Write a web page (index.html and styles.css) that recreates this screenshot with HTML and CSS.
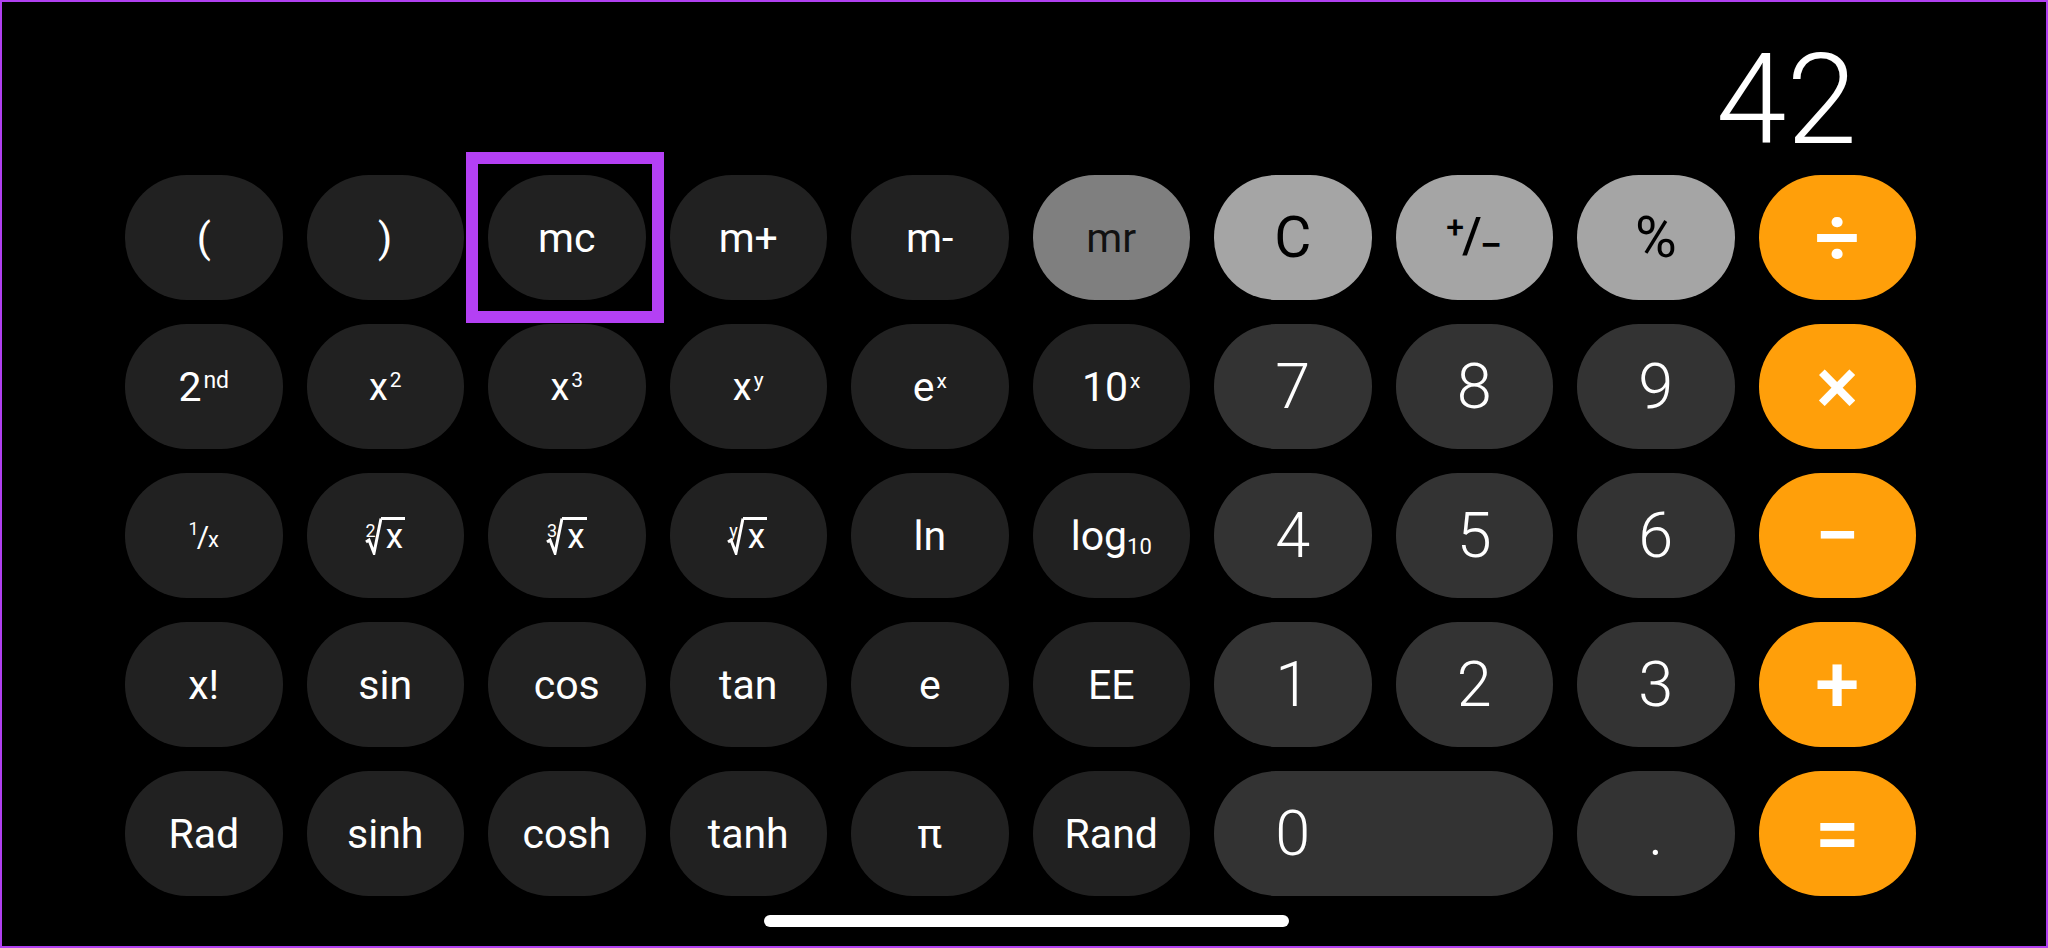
FILE: index.html
```html
<!DOCTYPE html>
<html lang="en">
  <head>
    <meta charset="UTF-8" />
    <meta name="viewport" content="width=device-width, initial-scale=1.0" />
    <title>Calculator</title>
    <link rel="stylesheet" href="styles.css">
  </head>
  <body>
    <div class="screen">
      <div class="display">42</div>

      <div class="keys">
        <!-- row 1 -->
        <div class="key fn">(</div>
        <div class="key fn">)</div>
        <div class="key fn marked">mc<span class="highlight"></span></div>
        <div class="key fn">m+</div>
        <div class="key fn">m-</div>
        <div class="key mem">mr</div>
        <div class="key light big">C</div>
        <div class="key light">
          <span class="pm"><span class="pm-plus">+</span>/<span class="pm-minus">&minus;</span></span>
        </div>
        <div class="key light big">%</div>
        <div class="key op">&divide;</div>

        <!-- row 2 -->
        <div class="key fn"><span>2<span class="sup-nd">nd</span></span></div>
        <div class="key fn"><span class="small-base">x<span class="sup">2</span></span></div>
        <div class="key fn"><span class="small-base">x<span class="sup">3</span></span></div>
        <div class="key fn"><span class="small-base">x<span class="sup">y</span></span></div>
        <div class="key fn"><span>e<span class="sup">x</span></span></div>
        <div class="key fn"><span>10<span class="sup">x</span></span></div>
        <div class="key num">7</div>
        <div class="key num">8</div>
        <div class="key num">9</div>
        <div class="key op">&times;</div>

        <!-- row 3 -->
        <div class="key fn">
          <span class="frac"><span class="frac-top">1</span>/<span class="frac-bottom">x</span></span>
        </div>
        <div class="key fn">
          <span class="root">
            <span class="root-idx">2</span>
            <svg class="radical" width="17" height="38" viewBox="0 0 17 38"><path d="M1 25 L4 23 L9 36 L16 1.5" /></svg>
            <span class="root-x">x</span>
          </span>
        </div>
        <div class="key fn">
          <span class="root">
            <span class="root-idx">3</span>
            <svg class="radical" width="17" height="38" viewBox="0 0 17 38"><path d="M1 25 L4 23 L9 36 L16 1.5" /></svg>
            <span class="root-x">x</span>
          </span>
        </div>
        <div class="key fn">
          <span class="root">
            <span class="root-idx">y</span>
            <svg class="radical" width="17" height="38" viewBox="0 0 17 38"><path d="M1 25 L4 23 L9 36 L16 1.5" /></svg>
            <span class="root-x">x</span>
          </span>
        </div>
        <div class="key fn">ln</div>
        <div class="key fn"><span>log<span class="sub">10</span></span></div>
        <div class="key num">4</div>
        <div class="key num">5</div>
        <div class="key num">6</div>
        <div class="key op">&minus;</div>

        <!-- row 4 -->
        <div class="key fn">x!</div>
        <div class="key fn">sin</div>
        <div class="key fn">cos</div>
        <div class="key fn">tan</div>
        <div class="key fn">e</div>
        <div class="key fn">EE</div>
        <div class="key num">1</div>
        <div class="key num">2</div>
        <div class="key num">3</div>
        <div class="key op">+</div>

        <!-- row 5 -->
        <div class="key fn">Rad</div>
        <div class="key fn">sinh</div>
        <div class="key fn">cosh</div>
        <div class="key fn">tanh</div>
        <div class="key fn">&pi;</div>
        <div class="key fn">Rand</div>
        <div class="key num zero"><span class="zero-digit">0</span></div>
        <div class="key num">.</div>
        <div class="key op">=</div>
      </div>

      <div class="home-bar"></div>
    </div>
  </body>
</html>
```

FILE: styles.css
```css
* {
  box-sizing: border-box;
}

body {
  margin: 0;
  background: #000;
  font-family: Roboto, "Liberation Sans", sans-serif;
}

.screen {
  width: 2048px;
  height: 948px;
  border: 2px solid #b040f0;
  background: #000;
  padding: 33px 0 0 123px;
}

.display {
  height: 127px;
  margin-bottom: 13px;
  padding-right: 189px;
  text-align: right;
  color: #fff;
  font-size: 127px;
  font-weight: 300;
  line-height: 130px;
}

.keys {
  display: grid;
  grid-template-columns: repeat(10, 157.5px);
  grid-auto-rows: 125px;
  column-gap: 24px;
  row-gap: 24px;
}

.key {
  display: flex;
  align-items: center;
  justify-content: center;
  border-radius: 62px;
  color: #fff;
  font-size: 41px;
  font-weight: 400;
  white-space: nowrap;
}

.fn {
  background: #212121;
}

.mem {
  background: #7f7f7f;
  color: #111;
}

.light {
  background: #a5a5a5;
  color: #000;
}

.big {
  font-size: 57px;
  font-weight: 400;
}

.num {
  background: #333333;
  font-size: 63px;
  font-weight: 300;
}

.op {
  background: #ff9f0a;
  font-size: 80px;
  font-weight: 500;
  line-height: 1;
}

.zero {
  grid-column: span 2;
  justify-content: flex-start;
}

.zero-digit {
  width: 157.5px;
  text-align: center;
}

/* highlight frame round the mc key */
.marked {
  position: relative;
}

.highlight {
  position: absolute;
  left: -22px;
  top: -23px;
  width: 198px;
  height: 171px;
  border: 12px solid #b440f4;
}

/* superscripts and subscripts */
.small-base {
  font-size: 38px;
}

.sup {
  font-size: 21px;
  vertical-align: 13px;
  margin-left: 2px;
}

.sup-nd {
  font-size: 23px;
  vertical-align: 13px;
  margin-left: 2px;
}

.sub {
  font-size: 22px;
  vertical-align: -4px;
}

.pm {
  font-size: 50px;
  font-weight: 500;
}

.pm-plus {
  font-size: 32px;
  vertical-align: 15px;
  margin-right: -2px;
}

.pm-minus {
  font-size: 40px;
  vertical-align: -6px;
  margin-left: -2px;
}

.frac {
  font-size: 30px;
}

.frac-top {
  font-size: 18px;
  vertical-align: 12px;
  margin-right: -2px;
}

.frac-bottom {
  font-size: 22px;
  margin-left: -1px;
}

.root {
  display: inline-flex;
  align-items: flex-start;
}

.root-idx {
  font-size: 18px;
  line-height: 17px;
  margin-top: 5px;
  margin-right: -11px;
}

.radical path {
  fill: none;
  stroke: #fff;
  stroke-width: 3;
  stroke-linejoin: miter;
}

.root-x {
  font-size: 35px;
  line-height: 34px;
  border-top: 3px solid #fff;
  padding: 0 2px 0 5px;
  margin-left: -1px;
}

.home-bar {
  width: 525px;
  height: 12px;
  margin: 19px 0 0 639px;
  border-radius: 6px;
  background: #fff;
}
```
